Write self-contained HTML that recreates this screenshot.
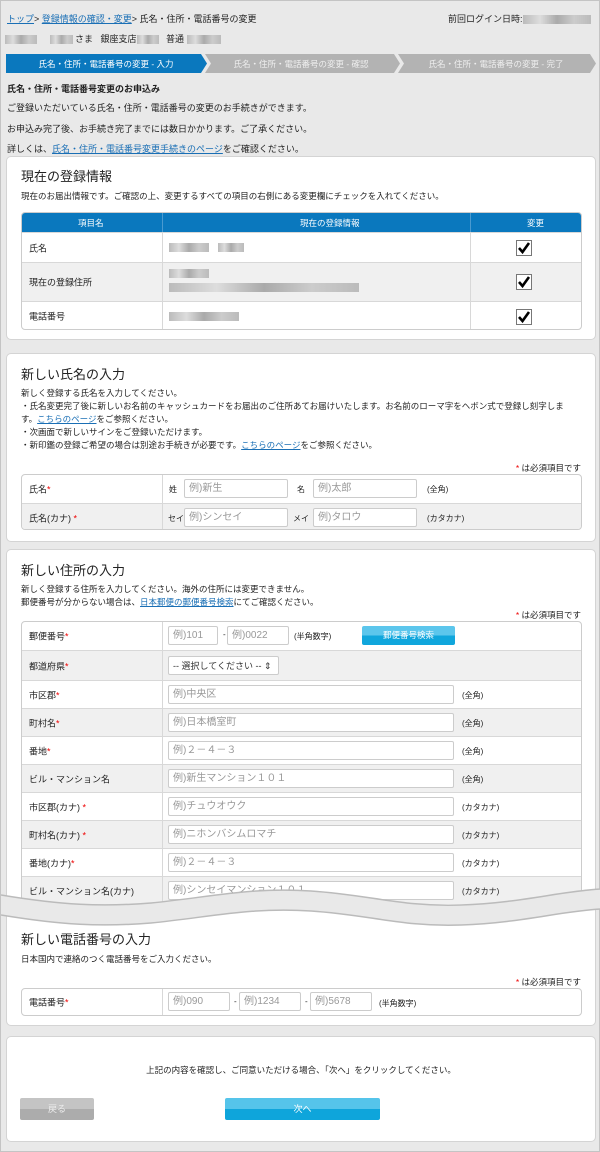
<!DOCTYPE html>
<html><head><meta charset="utf-8"><style>
*{box-sizing:border-box;margin:0;padding:0}
body{width:600px;height:1152px;background:#e9e9e9;font-family:"Liberation Sans","Noto Sans CJK JP",sans-serif;font-size:9px;color:#222;position:relative;overflow:hidden;border:1px solid #c4c4c4}
.a{position:absolute;white-space:nowrap}
a{color:#1a6fb5;text-decoration:underline}
.blur{display:inline-block;height:9px;background:linear-gradient(90deg,#bbb,#ddd,#aaa,#ccc,#bbb);vertical-align:middle}
.card{position:absolute;left:5px;width:590px;background:#fff;border-radius:5px;border:1px solid #d4d4d4}
.h{position:absolute;left:14px;font-size:13px;color:#222}
.tb{position:absolute;left:14px;width:561px;border:1px solid #ccc;border-radius:4px;overflow:hidden;background:#fff}
.row{position:relative;border-top:1px solid #d8d8d8}
.row:first-child{border-top:none}
.row.g{background:#f0f0f0}
.row .l{position:absolute;left:7px;top:50%;transform:translateY(-50%);white-space:nowrap}
.row .v{position:absolute;left:140px;right:0;top:0;bottom:0;border-left:1px solid #d8d8d8}
.req{color:#e00}
.in{position:absolute;height:19px;border:1px solid #ccc;background:#fff;color:#999;font-size:10px;padding-left:4px;line-height:17px;border-radius:2px;white-space:nowrap}
.sm{position:absolute;font-size:8px;white-space:nowrap}
.ck{position:absolute;left:494px}
</style></head><body>
<div class="a" style="left:6px;top:11px"><a>トップ</a>&gt; <a>登録情報の確認・変更</a>&gt; 氏名・住所・電話番号の変更</div>
<div class="a" style="left:447px;top:11px">前回ログイン日時:<span class="blur" style="width:68px"></span></div>
<div class="a" style="left:4px;top:31px"><span class="blur" style="width:32px"></span>&nbsp;&nbsp;&nbsp;&nbsp;&nbsp;<span class="blur" style="width:23px"></span> さま&nbsp;&nbsp;&nbsp;銀座支店<span class="blur" style="width:22px"></span>&nbsp;&nbsp;&nbsp;普通 <span class="blur" style="width:34px"></span></div>
<svg class="a" style="left:5px;top:53px" width="590" height="19">
<polygon points="0,0 195,0 201,9.5 195,19 0,19" fill="#0a78be"/>
<polygon points="199,0 388,0 394,9.5 388,19 199,19 205,9.5" fill="#b3b3b3"/>
<polygon points="392,0 584,0 590,9.5 584,19 392,19 398,9.5" fill="#b3b3b3"/>
<text x="100" y="13" fill="#fff" font-size="8.5" text-anchor="middle" font-family="Liberation Sans,Noto Sans CJK JP,sans-serif">氏名・住所・電話番号の変更 - 入力</text>
<text x="295" y="13" fill="#eee" font-size="8.5" text-anchor="middle" font-family="Liberation Sans,Noto Sans CJK JP,sans-serif">氏名・住所・電話番号の変更 - 確認</text>
<text x="490" y="13" fill="#eee" font-size="8.5" text-anchor="middle" font-family="Liberation Sans,Noto Sans CJK JP,sans-serif">氏名・住所・電話番号の変更 - 完了</text>
</svg>
<div class="a" style="left:6px;top:81px;font-weight:bold">氏名・住所・電話番号変更のお申込み</div>
<div class="a" style="left:6px;top:100px">ご登録いただいている氏名・住所・電話番号の変更のお手続きができます。</div>
<div class="a" style="left:6px;top:121px">お申込み完了後、お手続き完了までには数日かかります。ご了承ください。</div>
<div class="a" style="left:6px;top:141px">詳しくは、<a>氏名・住所・電話番号変更手続きのページ</a>をご確認ください。</div>

<div class="card" style="top:155px;height:184px">
<div class="h" style="top:9px">現在の登録情報</div>
<div class="a" style="left:14px;top:33px;font-size:8.5px">現在のお届出情報です。ご確認の上、変更するすべての項目の右側にある変更欄にチェックを入れてください。</div>
<div class="tb" style="top:55px;height:118px">
<div style="height:19px;background:#0a78be;color:#fff;position:relative;font-size:8.5px">
<span class="a" style="left:56px;top:4px">項目名</span><span class="a" style="left:278px;top:4px">現在の登録情報</span><span class="a" style="left:505px;top:4px">変更</span>
<div class="a" style="left:140px;top:0;height:19px;border-left:1px solid #4a9ad0"></div><div class="a" style="left:448px;top:0;height:19px;border-left:1px solid #4a9ad0"></div></div>
<div class="row" style="height:30px"><span class="l">氏名</span><div class="v"><span class="blur a" style="left:6px;top:10px;width:40px"></span><span class="blur a" style="left:55px;top:10px;width:26px"></span></div><div class="a" style="left:448px;top:0;bottom:0;border-left:1px solid #d8d8d8"></div><svg class="ck" style="top:7px" width="16" height="16"><rect x="0.5" y="0.5" width="15" height="15" fill="#fff" stroke="#777"/><path d="M3,8 L6.5,12 L13,3" fill="none" stroke="#000" stroke-width="2.6"/></svg></div>
<div class="row g" style="height:39px"><span class="l">現在の登録住所</span><div class="v"><span class="blur a" style="left:6px;top:6px;width:40px"></span><span class="blur a" style="left:6px;top:20px;width:190px"></span></div><div class="a" style="left:448px;top:0;bottom:0;border-left:1px solid #d8d8d8"></div><svg class="ck" style="top:11px" width="16" height="16"><rect x="0.5" y="0.5" width="15" height="15" fill="#fff" stroke="#777"/><path d="M3,8 L6.5,12 L13,3" fill="none" stroke="#000" stroke-width="2.6"/></svg></div>
<div class="row" style="height:29px"><span class="l">電話番号</span><div class="v"><span class="blur a" style="left:6px;top:10px;width:70px"></span></div><div class="a" style="left:448px;top:0;bottom:0;border-left:1px solid #d8d8d8"></div><svg class="ck" style="top:7px" width="16" height="16"><rect x="0.5" y="0.5" width="15" height="15" fill="#fff" stroke="#777"/><path d="M3,8 L6.5,12 L13,3" fill="none" stroke="#000" stroke-width="2.6"/></svg></div>
</div></div>

<div class="card" style="top:352px;height:189px">
<div class="h" style="top:10px">新しい氏名の入力</div>
<div class="a" style="left:14px;top:33px;font-size:8.5px;line-height:13px">新しく登録する氏名を入力してください。<br>・氏名変更完了後に新しいお名前のキャッシュカードをお届出のご住所あてお届けいたします。お名前のローマ字をヘボン式で登録し刻字しま<br>す。<a>こちらのページ</a>をご参照ください。<br>・次画面で新しいサインをご登録いただけます。<br>・新印鑑の登録ご希望の場合は別途お手続きが必要です。<a>こちらのページ</a>をご参照ください。</div>
<div class="a" style="right:14px;top:108px;font-size:8.5px"><span class="req">*</span> は必須項目です</div>
<div class="tb" style="top:120px;height:56px">
<div class="row" style="height:28px"><span class="l">氏名<span class="req">*</span></span><div class="v"><span class="sm" style="left:6px;top:9px">姓</span><div class="in" style="left:21px;top:4px;width:104px">例)新生</div><span class="sm" style="left:134px;top:9px">名</span><div class="in" style="left:150px;top:4px;width:104px">例)太郎</div><span class="sm" style="left:264px;top:9px">(全角)</span></div></div>
<div class="row g" style="height:28px"><span class="l">氏名(カナ) <span class="req">*</span></span><div class="v"><span class="sm" style="left:5px;top:9px">セイ</span><div class="in" style="left:21px;top:4px;width:104px">例)シンセイ</div><span class="sm" style="left:130px;top:9px">メイ</span><div class="in" style="left:150px;top:4px;width:104px">例)タロウ</div><span class="sm" style="left:264px;top:9px">(カタカナ)</span></div></div>
</div></div>

<div class="card" style="top:548px;height:380px">
<div class="h" style="top:10px">新しい住所の入力</div>
<div class="a" style="left:14px;top:33px;font-size:8.5px;line-height:13px">新しく登録する住所を入力してください。海外の住所には変更できません。<br>郵便番号が分からない場合は、<a>日本郵便の郵便番号検索</a>にてご確認ください。</div>
<div class="a" style="right:14px;top:59px;font-size:8.5px"><span class="req">*</span> は必須項目です</div>
<div class="tb" style="top:71px;height:300px">
<div class="row" style="height:28px"><span class="l">郵便番号<span class="req">*</span></span><div class="v"><div class="in" style="left:5px;top:4px;width:50px">例)101</div><span class="sm" style="left:60px;top:8px">-</span><div class="in" style="left:64px;top:4px;width:62px">例)0022</div><span class="sm" style="left:131px;top:9px">(半角数字)</span><div class="a" style="left:199px;top:4px;width:93px;height:19px;background:linear-gradient(#5cc6ec 50%,#10a6dc 50%);border-radius:2px;color:#fff;text-align:center;line-height:19px;font-size:8.5px">郵便番号検索</div></div></div>
<div class="row g" style="height:30px"><span class="l">都道府県<span class="req">*</span></span><div class="v"><div class="in" style="left:5px;top:5px;width:111px;color:#333;font-size:9px;line-height:18px">-- 選択してください -- ⇕</div></div></div>
<div class="row" style="height:28px"><span class="l">市区郡<span class="req">*</span></span><div class="v"><div class="in" style="left:5px;top:4px;width:286px">例)中央区</div><span class="sm" style="left:299px;top:9px">(全角)</span></div></div>
<div class="row g" style="height:28px"><span class="l">町村名<span class="req">*</span></span><div class="v"><div class="in" style="left:5px;top:4px;width:286px">例)日本橋室町</div><span class="sm" style="left:299px;top:9px">(全角)</span></div></div>
<div class="row" style="height:28px"><span class="l">番地<span class="req">*</span></span><div class="v"><div class="in" style="left:5px;top:4px;width:286px">例)２－４－３</div><span class="sm" style="left:299px;top:9px">(全角)</span></div></div>
<div class="row g" style="height:28px"><span class="l">ビル・マンション名</span><div class="v"><div class="in" style="left:5px;top:4px;width:286px">例)新生マンション１０１</div><span class="sm" style="left:299px;top:9px">(全角)</span></div></div>
<div class="row" style="height:28px"><span class="l">市区郡(カナ) <span class="req">*</span></span><div class="v"><div class="in" style="left:5px;top:4px;width:286px">例)チュウオウク</div><span class="sm" style="left:299px;top:9px">(カタカナ)</span></div></div>
<div class="row g" style="height:28px"><span class="l">町村名(カナ) <span class="req">*</span></span><div class="v"><div class="in" style="left:5px;top:4px;width:286px">例)ニホンバシムロマチ</div><span class="sm" style="left:299px;top:9px">(カタカナ)</span></div></div>
<div class="row" style="height:28px"><span class="l">番地(カナ)<span class="req">*</span></span><div class="v"><div class="in" style="left:5px;top:4px;width:286px">例)２－４－３</div><span class="sm" style="left:299px;top:9px">(カタカナ)</span></div></div>
<div class="row g" style="height:28px"><span class="l">ビル・マンション名(カナ)</span><div class="v"><div class="in" style="left:5px;top:4px;width:286px">例)シンセイマンション１０１</div><span class="sm" style="left:299px;top:9px">(カタカナ)</span></div></div>
</div></div>

<div class="card" style="top:905px;height:120px;border-top:none;border-radius:0 0 5px 5px">
<div class="h" style="top:23px">新しい電話番号の入力</div>
<div class="a" style="left:14px;top:47px;font-size:8.5px">日本国内で連絡のつく電話番号をご入力ください。</div>
<div class="a" style="right:14px;top:70px;font-size:8.5px"><span class="req">*</span> は必須項目です</div>
<div class="tb" style="top:82px;height:28px">
<div class="row" style="height:26px"><span class="l">電話番号<span class="req">*</span></span><div class="v"><div class="in" style="left:5px;top:3px;width:62px">例)090</div><span class="sm" style="left:71px;top:8px">-</span><div class="in" style="left:76px;top:3px;width:62px">例)1234</div><span class="sm" style="left:142px;top:8px">-</span><div class="in" style="left:147px;top:3px;width:62px">例)5678</div><span class="sm" style="left:216px;top:9px">(半角数字)</span></div></div>
</div></div>

<svg class="a" style="left:0;top:880px" width="600" height="52">
<path d="M0,14 C60,24 100,26 150,22 C210,16 250,6 310,10 C370,14 400,26 460,24 C520,22 560,10 600,8 L600,28 C560,30 520,42 460,44 C400,46 370,34 310,30 C250,26 210,36 150,42 C100,46 60,44 0,34 Z" fill="#e9e9e9"/>
<path d="M0,14 C60,24 100,26 150,22 C210,16 250,6 310,10 C370,14 400,26 460,24 C520,22 560,10 600,8" fill="none" stroke="#bbb" stroke-width="1.5"/>
<path d="M0,34 C60,44 100,46 150,42 C210,36 250,26 310,30 C370,34 400,46 460,44 C520,42 560,30 600,28" fill="none" stroke="#bbb" stroke-width="1.5"/>
</svg>

<div class="card" style="top:1035px;height:106px">
<div class="a" style="left:0;width:588px;text-align:center;top:27px;font-size:8.5px">上記の内容を確認し、ご同意いただける場合、「次へ」をクリックしてください。</div>
<div class="a" style="left:13px;top:61px;width:74px;height:22px;background:linear-gradient(#c4c4c4 50%,#acacac 50%);border-radius:2px;color:#eee;text-align:center;line-height:22px;font-size:9px">戻る</div>
<div class="a" style="left:218px;top:61px;width:155px;height:22px;background:linear-gradient(#55c4ea 50%,#0ea5db 50%);border-radius:2px;color:#fff;text-align:center;line-height:22px;font-size:9px">次へ</div>
</div>
</body></html>
